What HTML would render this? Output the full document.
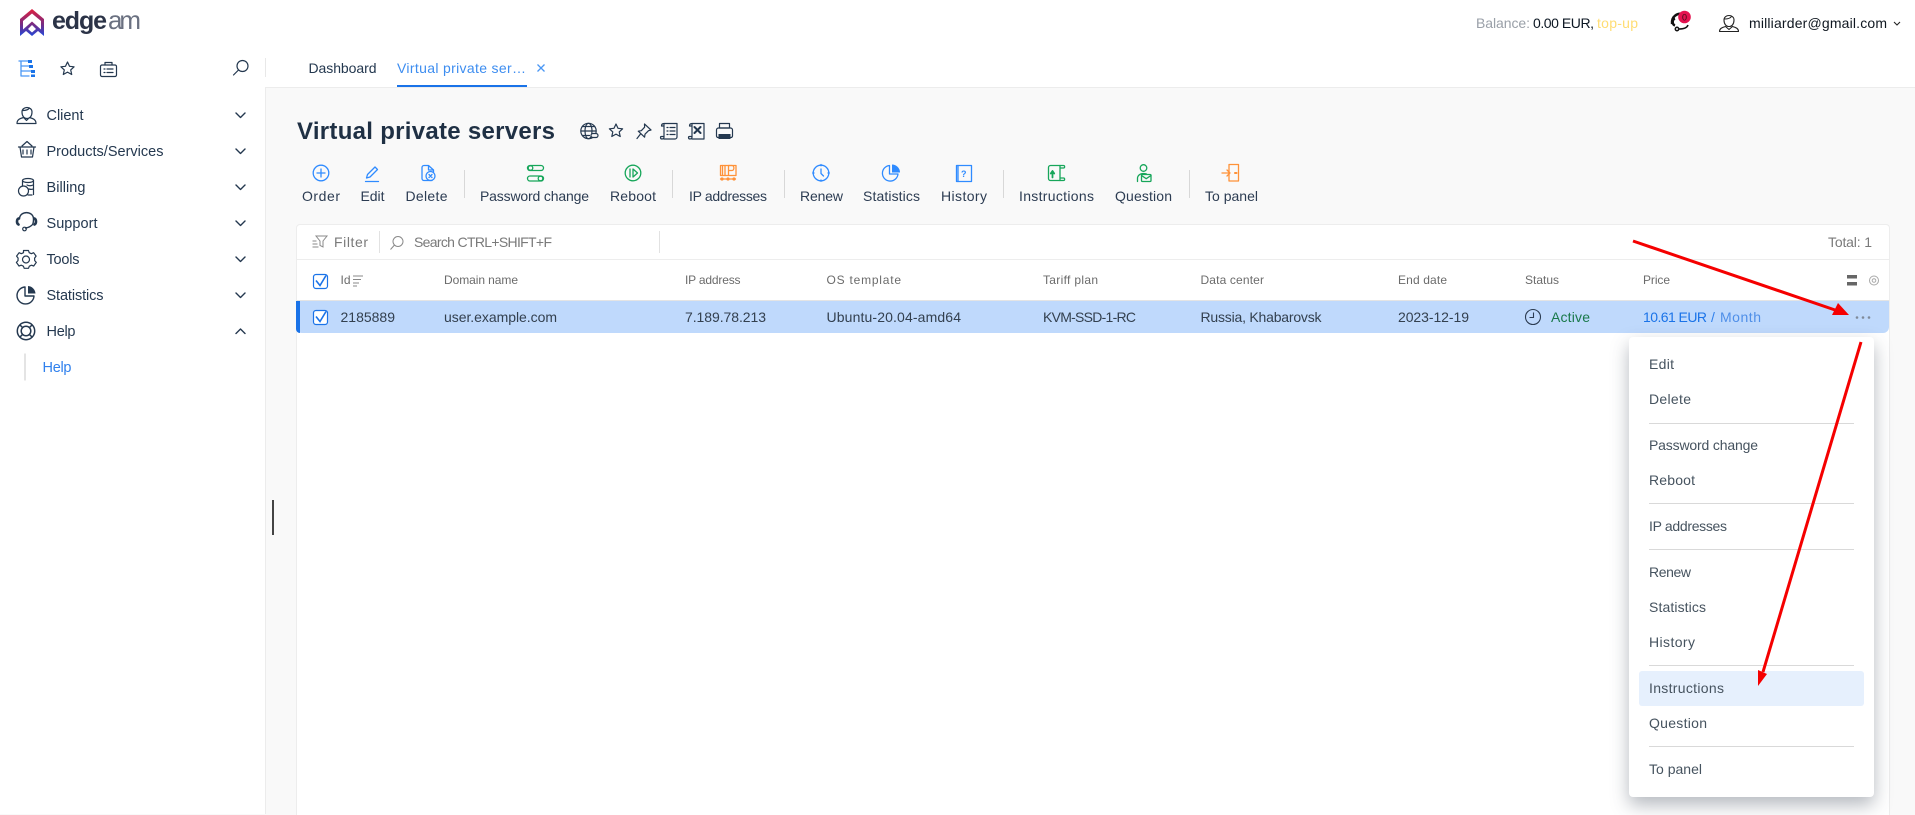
<!DOCTYPE html>
<html lang="en"><head><meta charset="utf-8"><title>Virtual private servers</title>
<style>
html,body{margin:0;padding:0;width:1915px;height:814px;overflow:hidden;background:#f9f9f9;font-family:"Liberation Sans",sans-serif}
.a{position:absolute}
svg{position:absolute;left:0;top:0}
text{font-family:"Liberation Sans",sans-serif;font-size:14px;fill:#2c3c52}
.m{font-size:14.5px;fill:#24384f}
.h{font-size:12px;fill:#6b6b6b}
.r{font-size:14px;fill:#33404f}
.p{font-size:14px;fill:#46535f}
.i{fill:none;stroke:#24384f;stroke-width:1.2;stroke-linecap:round;stroke-linejoin:round}
.b{fill:none;stroke:#2f8bff;stroke-width:1.3;stroke-linecap:round;stroke-linejoin:round}
.g{fill:none;stroke:#17a65a;stroke-width:1.3;stroke-linecap:round;stroke-linejoin:round}
.o{fill:none;stroke:#ff9238;stroke-width:1.3;stroke-linecap:round;stroke-linejoin:round}
</style></head><body>
<div class="a" style="left:0;top:0;width:1915px;height:87px;background:#fff;border-bottom:1px solid #ececec"></div>
<div class="a" style="left:0;top:87px;width:265px;height:727px;background:#fff;border-right:1px solid #ececec"></div>
<div class="a" style="left:272px;top:500px;width:2px;height:35px;background:#444"></div>
<div class="a" style="left:296px;top:224px;width:1592px;height:590px;background:#fff;border:1px solid #ededed;border-bottom:0;border-radius:4px 4px 0 0"></div>
<div class="a" style="left:297px;top:259px;width:1592px;height:1px;background:#ededed"></div>
<div class="a" style="left:297px;top:300px;width:1592px;height:1px;background:#e4e4e4"></div>
<div class="a" style="left:296px;top:301px;width:1593px;height:32px;background:#bfd9fc;border-radius:0 0 6px 6px;border-left:0;box-sizing:border-box"></div>
<div class="a" style="left:296px;top:301px;width:4px;height:32px;background:#1a73e8;border-radius:0 0 0 5px"></div>
<div class="a" style="left:1629px;top:337px;width:245px;height:460px;background:#fff;border-radius:4px;box-shadow:0 8px 18px rgba(60,72,88,.38)"></div>
<div class="a" style="left:1639px;top:671px;width:225px;height:35px;background:#e6f0fd;border-radius:3px"></div>

<svg width="1915" height="814" viewBox="0 0 1915 814" xmlns="http://www.w3.org/2000/svg">
<defs><linearGradient id="lg" x1="0" y1="0" x2="0" y2="1"><stop offset="0" stop-color="#e0203f"/><stop offset=".55" stop-color="#7a2a80"/><stop offset="1" stop-color="#2347d8"/></linearGradient></defs>

<!-- logo -->
<path fill="url(#lg)" fill-rule="evenodd" d="M32 9 L44 19 V36 L38 31 L32 36 L26 31 L20 36 V19 Z M32 13.500 L23 21 V29.500 L32 21.500 L41 29.500 V21 Z M32 25 L28 29 L32 32.500 L36 29 Z"/>
<text x="52" y="29" style="font-size:25px;font-weight:700;fill:#2b3347" textLength="55">edge</text>
<text x="108" y="29" style="font-size:26px;fill:#6a7080" textLength="33">am</text>

<!-- sidebar top icons -->
<g class="b" style="stroke:#4a97f5"><path d="M19 61H29M21 61V76H29M21 66H30M21 71H32"/></g>
<g fill="#1a73e8"><rect x="28" y="60" width="4" height="3"/><rect x="29" y="65" width="4" height="3"/><rect x="31" y="70" width="4" height="3"/><rect x="31" y="74.500" width="4" height="2.500"/></g>
<path class="i" d="M67.500 62l2 4.300 4.600.5-3.400 3.100 1 4.600-4.200-2.400-4.200 2.400 1-4.600-3.400-3.100 4.600-.5z"/>
<g class="i"><rect x="100.500" y="65" width="16" height="11.500" rx="1.500"/><path d="M105 65v-2.500h7V65M104 69h1M104 72.500h1M107 69h6M107 72.500h6"/></g>
<g class="i"><circle cx="242.500" cy="66" r="5.500"/><path d="M238.500 70l-5 5"/></g>
<path d="M265.500 58V77" stroke="#e8e8e8"/>

<!-- sidebar -->
<g class="i">
<path d="M17 123.500c0-4 3-5 6.500-6l3 3 3-3c3.500 1 6.500 2 6.500 6zM22 112c0-6 10-6 10 0 0 4-2 6.500-5 6.500S22 116 22 112zM22.500 110.500c3 0 6-1 7-2.500"/>
<path d="M18.500 147h17M20 147l1.500 10h11l1.500-10M23 150v4M27 150v4M31 150v4M22 146l5-4.500 5 4.500"/>
<ellipse cx="28" cy="180.500" rx="5.500" ry="2"/><path d="M22.500 180.500V186M33.500 180.500V194.500M27 185c2 1 4 1 6 0M29 189c1.500 .5 3 .5 4 0M28 195h4"/><circle cx="23.500" cy="191" r="5"/>
<path d="M19.500 219c0-8.500 14-8.500 14 0 0 2 0 4-1 5.500-1.500 2-4 3-7 3.500" stroke-width="1.400"/><circle cx="24.500" cy="229" r="1.800"/><path d="M18.500 218.500c-2 1-2 5 0 6M34.500 218.500c2 1 2 5 0 6" stroke-width="2.600"/>
<circle cx="26" cy="259.500" r="3.500"/><path d="M23.500 250.500h5l.7 2.200 2.200 1 2.200-1 2.500 3.400-1.500 2 .1 2.500 1.600 1.800-2.600 3.600-2.200-.8-2.200 1-.8 2.100h-4.300l-.8-2.100-2.200-1-2.200.8-2.600-3.600 1.600-1.800.1-2.500-1.500-2 2.500-3.400 2.200 1 2.200-1z"/>
<path d="M25 287a8.500 8.500 0 1 0 9 9h-9z" stroke-width="1.400"/>
<circle cx="26" cy="331" r="8.700" stroke-width="1.500"/><circle cx="26" cy="331" r="4.800" stroke-width="1.500"/><path d="M20 325l2.500 2.500M32 325l-2.500 2.500M20 337l2.500-2.500M32 337l-2.500-2.500" stroke-width="1.500"/>
</g>
<path d="M28 286a8 8 0 0 1 7.500 7.500H28z" fill="#24384f"/>
<text class="m" x="46.500" y="120" textLength="37">Client</text>
<text class="m" x="46.500" y="156" textLength="117">Products/Services</text>
<text class="m" x="46.500" y="192" textLength="39">Billing</text>
<text class="m" x="46.500" y="228" textLength="51">Support</text>
<text class="m" x="46.500" y="264" textLength="33">Tools</text>
<text class="m" x="46.500" y="300" textLength="57">Statistics</text>
<text class="m" x="46.500" y="336" textLength="29">Help</text>
<text class="m" x="42.500" y="372" textLength="29" style="fill:#2f80ed">Help</text>
<path d="M25 353.500V380.500" stroke="#e4e4e4" stroke-width="2"/>
<g class="i" style="stroke-width:1.400">
<path d="M236 113l4.500 4.500 4.500-4.500M236 149l4.500 4.500 4.500-4.500M236 185l4.500 4.500 4.500-4.500M236 221l4.500 4.500 4.500-4.500M236 257l4.500 4.500 4.500-4.500M236 293l4.500 4.500 4.500-4.500M236 333.500l4.500-4.500 4.500 4.500"/>
</g>

<!-- tabs -->
<text x="308.500" y="73" textLength="68" style="fill:#24384f">Dashboard</text>
<text x="397" y="73" textLength="129" style="fill:#3d8df0">Virtual private ser…</text>
<rect x="397" y="85" width="130" height="2" fill="#1a73e8"/>
<path d="M537.500 64.500l7 7M544.500 64.500l-7 7" stroke="#4a97f5" stroke-width="1.300"/>

<!-- header right -->
<text x="1476" y="28" textLength="54" style="fill:#9aa0a8">Balance:</text>
<text x="1533" y="28" textLength="61" style="fill:#0b1622">0.00 EUR,</text>
<text x="1597" y="28" textLength="41" style="fill:#ffdd73">top-up</text>
<g fill="none" stroke="#111" stroke-width="1.500"><path d="M1672 24c-1-8 6-11 10-10M1675 18.500c-3 1-3 6 0 7" stroke-width="2.400"/><path d="M1688 25c-1 3-4 4-9 4"/><circle cx="1677" cy="29" r="1.700"/></g>
<circle cx="1684.500" cy="17" r="6.300" fill="#e4124f"/>
<text x="1682" y="20.500" style="font-size:9px;fill:#3a0714">0</text>
<g fill="none" stroke="#222" stroke-width="1.100" stroke-linejoin="round"><path d="M1719.500 31.500c0-3 2.500-4 6-5l3.500 3 3.500-3c3.500 1 6 2 6 5z"/><path d="M1724 20c0-6 10-6 10 0 0 4-2 6.500-5 6.500s-5-2.500-5-6.500zM1724.500 19c3 0 6-1 7-2.500"/></g>
<text x="1749" y="28" textLength="138" style="fill:#0f1720">milliarder@gmail.com</text>
<path d="M1894 22l3 3 3-3" fill="none" stroke="#222" stroke-width="1.100"/>

<!-- title -->
<text x="297" y="139" textLength="258" style="font-size:24px;font-weight:700;fill:#1f3044">Virtual private servers</text>
<g class="i">
<circle cx="588.500" cy="131" r="7.700"/><ellipse cx="588.500" cy="131" rx="3.500" ry="7.700"/><path d="M581 131h15M582.500 126.500h12M582.500 135.500h7"/><rect x="591" y="133.500" width="7" height="4" rx="2" fill="#f9f9f9"/>
<path d="M616 124l2 4.300 4.600.5-3.400 3.100 1 4.600-4.200-2.400-4.200 2.400 1-4.600-3.400-3.100 4.600-.5z"/>
<path d="M644.500 124l6.500 6-2.500.7-3.500 3.500-.4 3-6.300-6 3-.5 3.300-3.500zM640.500 134l-3.500 4.500"/>
<path d="M664 123.500h13v13.500c0 1-1 2-2 2h-11M664 123.500c-1.500 0-2.500 1-2.500 2.500h2.500M664 123.500V137c0 1-.5 2-2 2-1 0-1.500-.5-1.500-1.500 0-.5.500-1 1-1h2.500M667 127.500h1M670 127.500h5M667 131h1M670 131h5M667 134.500h1M670 134.500h5"/>
<path d="M692 123.500h12v15.500h-12M692 123.500c-1.500 0-2.500 1-2.500 2.500h2.500M692 123.500V137c0 1-.5 2-2 2-1 0-1.500-.5-1.500-1.500 0-.5.500-1 1-1h2.500"/>
<path d="M694.500 127l6 6M700.500 127l-6 6" stroke-width="2"/>
<rect x="719.500" y="123.500" width="10" height="4.500"/><path d="M719.500 137.500h-1.500a1.500 1.500 0 0 1-1.500-1.500v-6a2 2 0 0 1 2-2h12a2 2 0 0 1 2 2v6a1.500 1.500 0 0 1-1.500 1.500h-1.500"/>
</g>
<rect x="718.500" y="134" width="12" height="5" fill="#24384f"/>

<!-- toolbar icons -->
<g class="b">
<circle cx="321" cy="173" r="7.800"/><path d="M321 169v8M317 173h8"/>
<path d="M365.500 181.500h13M366.500 178l1-3.500 7.500-7.500 2.500 2.500-7.500 7.500z"/>
<path d="M432 180.500h-8a2 2 0 0 1-2-2v-11a2 2 0 0 1 2-2h4.500l5 4.500v2M428.500 165.500v4.500h5"/><circle cx="430.500" cy="176" r="4.500"/><path d="M429 174.500l3 3M432 174.500l-3 3"/>
<circle cx="821" cy="173" r="7.800"/><path d="M821 169v4.500l2.500 2.500M821 164.500v1.300M821 180v1.300M812.700 173h1.300M828 173h1.300"/>
<path d="M889.500 165.500a7.800 7.800 0 1 0 8.500 8.500h-8.500z"/>
<rect x="956.500" y="165.500" width="15" height="16"/><path d="M958 165.500v16" /><text x="961" y="177" style="font-size:9px;font-weight:700;fill:#2f8bff;stroke:none">?</text>
</g>
<path d="M892 164.500a8 8 0 0 1 8 8h-8z" fill="#2f8bff"/>
<g class="g">
<rect x="527.500" y="165.500" width="16" height="5" rx="2.500"/><circle cx="530.500" cy="168" r="2.300"/>
<rect x="527.500" y="176" width="16" height="5" rx="2.500"/><circle cx="540.500" cy="178.500" r="2.300"/>
<circle cx="633" cy="173" r="7.800"/><path d="M630 169v8M633 169l4.500 4-4.500 4z"/>
<path d="M1060 165.500h-9.500a2 2 0 0 0-2 2v11a2 2 0 0 0 2 2h9.500"/>
<path d="M1060 165.500v15M1060 165.500h3.500c1.500 0 1.500 2.500 0 2.500h-3.500M1060 178h3.500c1.500 0 1.500 2.500 0 2.500h-3.500"/>
<path d="M1052.500 177.500v-5M1050.800 173.500l1.700-2.500 1.700 2.500" stroke-width="1.800"/>
<circle cx="1143.500" cy="168" r="3.300"/><path d="M1137.500 181.500v-3c0-3 2.500-5 6-5 1 0 2 .2 3 .5"/><rect x="1141.500" y="174.500" width="9.500" height="7" rx="1"/><path d="M1141.500 175.500l4.700 3.200 4.800-3.200"/>
</g>
<g class="o">
<rect x="720.500" y="165.500" width="15.500" height="10"/><path d="M725 165.500v10M722.500 165.500v10M728.500 175v-9.500h3.500c2.500 0 2.500 5 0 5h-3.500M720.500 179h15"/>
<rect x="1229" y="164.500" width="9.500" height="16.500"/><path d="M1222 173h8M1227 170l3 3-3 3"/><path d="M1235 173h1.500" stroke-width="2"/>
</g>
<g fill="#ff9238"><circle cx="722" cy="179" r="1.600"/><circle cx="728" cy="179" r="1.600"/><circle cx="734" cy="179" r="1.600"/></g>

<g stroke="#d8d8d8"><path d="M464.500 170V198M672.500 170V198M784.500 170V198M1003.500 170V198M1189.500 170V198"/></g>
<g class="tb">
<text x="302" y="201" textLength="38">Order</text>
<text x="360.500" y="201" textLength="24">Edit</text>
<text x="405.500" y="201" textLength="42">Delete</text>
<text x="480" y="201" textLength="109">Password change</text>
<text x="610" y="201" textLength="46">Reboot</text>
<text x="689" y="201" textLength="78">IP addresses</text>
<text x="800" y="201" textLength="43">Renew</text>
<text x="863" y="201" textLength="57">Statistics</text>
<text x="941" y="201" textLength="46">History</text>
<text x="1019" y="201" textLength="75">Instructions</text>
<text x="1115" y="201" textLength="57">Question</text>
<text x="1205" y="201" textLength="53">To panel</text>
</g>

<!-- filter bar -->
<g fill="none" stroke="#8a8a8a" stroke-width="1"><path d="M316 236h11l-4 5v6l-3-1.500V241zM312.500 241h4M312.500 244h5M312.500 247h6"/><circle cx="398" cy="241.500" r="5"/><path d="M394.500 245l-4 4.500"/></g>
<text x="334" y="247" textLength="34" style="fill:#7a7a7a">Filter</text>
<text x="414" y="247" textLength="138" style="fill:#7a7a7a">Search CTRL+SHIFT+F</text>
<path d="M379.500 231V253M659.500 231V253" stroke="#e2e2e2"/>
<text x="1828" y="247" textLength="44" style="fill:#7a7a7a">Total: 1</text>

<!-- table head -->
<rect x="313.500" y="274.500" width="14" height="14" rx="2.500" fill="#fff" stroke="#1a73e8" stroke-width="1.200"/>
<path d="M316 280.500l4 5 6-10" fill="none" stroke="#1a73e8" stroke-width="1.600"/>
<text class="h" x="340.500" y="284">Id</text>
<path d="M353 276h10M353 279.500h8M353 283h6M353 286h4" stroke="#888" stroke-width="1"/>
<text class="h" x="444" y="284" textLength="74">Domain name</text>
<text class="h" x="685" y="284" textLength="55.500">IP address</text>
<text class="h" x="826.500" y="284" textLength="74.500">OS template</text>
<text class="h" x="1043" y="284" textLength="55">Tariff plan</text>
<text class="h" x="1200.500" y="284" textLength="63.500">Data center</text>
<text class="h" x="1398" y="284" textLength="49">End date</text>
<text class="h" x="1525" y="284" textLength="34">Status</text>
<text class="h" x="1643" y="284" textLength="27">Price</text>
<rect x="1847" y="275" width="10" height="3.500" fill="#666"/><rect x="1847" y="282" width="10" height="3.500" fill="#666"/>
<g fill="none" stroke="#a8a8a8" stroke-width="1"><circle cx="1874" cy="280.500" r="4.500"/><circle cx="1874" cy="280.500" r="1.800"/></g>

<!-- row -->
<rect x="313.500" y="310.500" width="14" height="14" rx="2.500" fill="#fff" stroke="#1a73e8" stroke-width="1.200"/>
<path d="M316 316.500l4 5 6-10" fill="none" stroke="#1a73e8" stroke-width="1.600"/>
<text class="r" x="340.500" y="322" textLength="54.500">2185889</text>
<text class="r" x="444" y="322" textLength="113">user.example.com</text>
<text class="r" x="685" y="322" textLength="81">7.189.78.213</text>
<text class="r" x="826.500" y="322" textLength="134.500">Ubuntu-20.04-amd64</text>
<text class="r" x="1043" y="322" textLength="93">KVM-SSD-1-RC</text>
<text class="r" x="1200.500" y="322" textLength="121">Russia, Khabarovsk</text>
<text class="r" x="1398" y="322" textLength="71">2023-12-19</text>
<g fill="none" stroke="#2c3c52" stroke-width="1.100"><circle cx="1533" cy="317" r="7.500"/><path d="M1533.500 312.500V317.500H1529.500"/></g>
<text x="1551" y="322" textLength="39" style="fill:#19794a">Active</text>
<text x="1643" y="322" textLength="64" style="fill:#1a73e8">10.61 EUR</text>
<text x="1711" y="322" textLength="4" style="fill:#2f80ed">/</text>
<text x="1720" y="322" textLength="41" style="fill:#4f8fe8">Month</text>
<g fill="#7f8a99"><circle cx="1857" cy="317.500" r="1.300"/><circle cx="1863" cy="317.500" r="1.300"/><circle cx="1869" cy="317.500" r="1.300"/></g>

<!-- popup menu -->
<text class="p" x="1649" y="369" textLength="25">Edit</text>
<text class="p" x="1649" y="404" textLength="42">Delete</text>
<text class="p" x="1649" y="450" textLength="109">Password change</text>
<text class="p" x="1649" y="485" textLength="46">Reboot</text>
<text class="p" x="1649" y="531" textLength="78">IP addresses</text>
<text class="p" x="1649" y="577" textLength="42">Renew</text>
<text class="p" x="1649" y="612" textLength="57">Statistics</text>
<text class="p" x="1649" y="647" textLength="46">History</text>
<text class="p" x="1649" y="693" textLength="75">Instructions</text>
<text class="p" x="1649" y="728" textLength="58">Question</text>
<text class="p" x="1649" y="774" textLength="53">To panel</text>
<g stroke="#d9d9d9"><path d="M1649 423.500H1854M1649 503.500H1854M1649 549.500H1854M1649 665.500H1854M1649 746.500H1854"/></g>

<!-- red arrows -->
<path d="M1633 241L1838 311" stroke="#f50000" stroke-width="3" fill="none"/>
<path d="M1849 315L1832 315L1838 303Z" fill="#f50000"/>
<path d="M1861 342L1763 672" stroke="#f50000" stroke-width="3" fill="none"/>
<path d="M1758 686L1758 670L1767 674Z" fill="#f50000"/>
</svg>
</body></html>
